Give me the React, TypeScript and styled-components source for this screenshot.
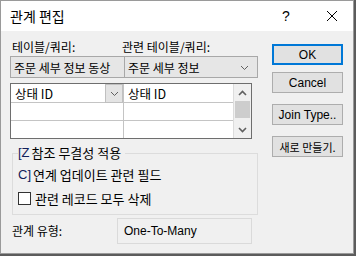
import styled, { createGlobalStyle } from "styled-components"

const GlobalStyle = createGlobalStyle`
  html, body {
    margin: 0;
    padding: 0;
    background: #5c5c5c;
  }
  body {
    font-family: "Noto Sans CJK KR", "Noto Sans", sans-serif;
    font-size: 12px;
    color: #000;
  }
`

const KR = `"Noto Sans CJK KR", "Noto Sans", sans-serif`
const LATIN = `"Liberation Sans", "Noto Sans CJK KR", sans-serif`

function Chevron({ up = false, bold = false }: { up?: boolean; bold?: boolean }) {
  return (
    <svg width="9" height="6" viewBox="0 0 9 6">
      <path
        d={up ? "M1 5 L4.5 1.5 L8 5" : "M1 1 L4.5 4.5 L8 1"}
        fill="none"
        stroke="#606060"
        strokeWidth={bold ? 1.6 : 1}
      />
    </svg>
  )
}

export default function App() {
  return (
    <>
      <GlobalStyle />
      <Dialog>
        <TitleBar>
          <Title>관계 편집</Title>
          <TitleButton $w={50}>?</TitleButton>
          <TitleButton $w={42}>
            <svg width="12" height="12" viewBox="0 0 12 12">
              <path d="M1 1 L11 11 M11 1 L1 11" stroke="#000" strokeWidth="1" />
            </svg>
          </TitleButton>
        </TitleBar>
        <Content>
          <LeftColumn>
            <Labels>
              <Label>테이블/쿼리:</Label>
              <Label>관련 테이블/쿼리:</Label>
            </Labels>
            <HeaderRow>
              <HeaderCell>주문 세부 정보 동상</HeaderCell>
              <HeaderCell $last>
                주문 세부 정보
                <Chevron />
              </HeaderCell>
            </HeaderRow>
            <FieldGrid>
              <Rows>
                <Row $h={19}>
                  <Cell>
                    상태 ID
                    <ComboButton>
                      <Chevron />
                    </ComboButton>
                  </Cell>
                  <Cell $right>상태 ID</Cell>
                </Row>
                <Row $h={18}>
                  <Cell />
                  <Cell $right />
                </Row>
                <Row $h={17} $last>
                  <Cell />
                  <Cell $right />
                </Row>
              </Rows>
              <ScrollBar>
                <ScrollArrow>
                  <Chevron up bold />
                </ScrollArrow>
                <ScrollTrack>
                  <Thumb />
                </ScrollTrack>
                <ScrollArrow>
                  <Chevron bold />
                </ScrollArrow>
              </ScrollBar>
            </FieldGrid>
            <OptionsFrame>
              <Legend>
                <Glyph>[Z</Glyph>참조 무결성 적용
              </Legend>
              <OptionRow>
                <Glyph>C]</Glyph>연계 업데이트 관련 필드
              </OptionRow>
              <OptionRow>
                <CheckBox />
                관련 레코드 모두 삭제
              </OptionRow>
            </OptionsFrame>
            <TypeRow>
              <Label>관계 유형:</Label>
              <TypeBox>One-To-Many</TypeBox>
            </TypeRow>
          </LeftColumn>
          <Buttons>
            <Button $default>OK</Button>
            <Button>Cancel</Button>
            <Button $gap>Join Type..</Button>
            <Button $small>새로 만들기.</Button>
          </Buttons>
        </Content>
      </Dialog>
    </>
  )
}

const Dialog = styled.div`
  width: 354px;
  height: 254px;
  box-sizing: border-box;
  border: 1px solid #9a9a9a;
  background: #f0f0f0;
  display: flex;
  flex-direction: column;
`

const TitleBar = styled.div`
  height: 30px;
  background: #fff;
  display: flex;
  align-items: center;
  padding-left: 9px;
`

const Title = styled.div`
  flex: 1;
  font-family: ${KR};
  font-size: 14px;
  color: #000;
`

const TitleButton = styled.div<{ $w: number }>`
  width: ${(p) => p.$w}px;
  height: 30px;
  display: flex;
  align-items: center;
  justify-content: center;
  font-family: ${LATIN};
  font-size: 14px;
`

const Content = styled.div`
  flex: 1;
  display: flex;
  padding: 0 0 0 9px;
`

const LeftColumn = styled.div`
  width: 248px;
  display: flex;
  flex-direction: column;
`

const Labels = styled.div`
  display: grid;
  grid-template-columns: 112px 1fr;
  padding-top: 6px;
  height: 19px;
  align-items: center;

  & > div:first-child {
    padding-left: 2px;
  }
`

const Label = styled.div`
  font-family: ${KR};
  font-size: 12px;
  line-height: 16px;
  white-space: nowrap;
`

const HeaderRow = styled.div`
  display: grid;
  grid-template-columns: 113px 1fr;
  height: 22px;
  box-sizing: border-box;
  border: 1px solid #a8a8a8;
  background: #e6e6e6;
`

const HeaderCell = styled.div<{ $last?: boolean }>`
  display: flex;
  align-items: center;
  justify-content: space-between;
  padding: 0 8px 0 3px;
  font-size: 12px;
  white-space: nowrap;
  overflow: hidden;
  border-left: ${(p) => (p.$last ? "1px solid #a8a8a8" : "none")};
  svg {
    margin-top: 1px;
  }
`

const FieldGrid = styled.div`
  margin-top: 5px;
  width: 242px;
  height: 56px;
  box-sizing: border-box;
  border: 1px solid #6e6e6e;
  background: #fff;
  display: flex;
`

const Rows = styled.div`
  flex: 1;
  display: flex;
  flex-direction: column;
`

const Row = styled.div<{ $h: number; $last?: boolean }>`
  height: ${(p) => p.$h}px;
  display: grid;
  grid-template-columns: 112px 1fr;
  border-bottom: ${(p) => (p.$last ? "none" : "1px solid #c4c4c4")};
  box-sizing: border-box;
`

const Cell = styled.div<{ $right?: boolean }>`
  position: relative;
  display: flex;
  align-items: center;
  padding-left: 4px;
  font-size: 12.5px;
  white-space: nowrap;
  border-left: ${(p) => (p.$right ? "1px solid #c4c4c4" : "none")};
`

const ComboButton = styled.div`
  position: absolute;
  right: 0;
  top: 0;
  width: 16px;
  height: 17px;
  background: #e4e4e4;
  border: 1px solid #c0c0c0;
  display: flex;
  align-items: center;
  justify-content: center;
`

const ScrollBar = styled.div`
  width: 17px;
  background: #f0f0f0;
  border-left: 1px solid #dcdcdc;
  display: flex;
  flex-direction: column;
`

const ScrollArrow = styled.div`
  height: 17px;
  display: flex;
  align-items: center;
  justify-content: center;
`

const ScrollTrack = styled.div`
  flex: 1;
  display: flex;
  flex-direction: column;
  padding: 0 1px;
`

const Thumb = styled.div`
  height: 17px;
  background: #cdcdcd;
`

const OptionsFrame = styled.fieldset`
  margin: 5px 0 0 2px;
  padding: 0 0 4px 5px;
  width: 246px;
  box-sizing: border-box;
  border: 1px solid #dcdcdc;
  display: flex;
  flex-direction: column;
`

const Legend = styled.legend`
  padding: 0 4px 0 0;
  margin-left: 0;
  font-size: 13px;
  line-height: 18px;
  display: flex;
  align-items: center;
`

const OptionRow = styled.div`
  display: flex;
  align-items: center;
  height: 24px;
  font-size: 13px;
`

const Glyph = styled.span`
  font-family: ${LATIN};
  font-size: 13px;
  color: #10205a;
  margin-right: 2px;
`

const CheckBox = styled.span`
  width: 11px;
  height: 11px;
  border: 1px solid #333;
  background: #fff;
  margin-right: 4px;
`

const TypeRow = styled.div`
  margin-top: 3px;
  display: flex;
  align-items: center;
  padding-left: 2px;

  & > div:first-child {
    width: 105px;
  }
`

const TypeBox = styled.div`
  width: 135px;
  height: 26px;
  box-sizing: border-box;
  border: 1px solid #dadada;
  display: flex;
  align-items: center;
  padding-left: 6px;
  font-family: ${LATIN};
  font-size: 12px;
`

const Buttons = styled.div`
  margin-left: 14px;
  padding-top: 13px;
  display: flex;
  flex-direction: column;
  gap: 7px;
`

const Button = styled.div<{ $default?: boolean; $gap?: boolean; $small?: boolean }>`
  width: 71px;
  height: 21px;
  box-sizing: border-box;
  background: #e1e1e1;
  border: ${(p) => (p.$default ? "2px solid #0078d7" : "1px solid #adadad")};
  display: flex;
  align-items: center;
  justify-content: center;
  font-family: ${(p) => (p.$small ? KR : LATIN)};
  font-size: ${(p) => (p.$small ? "11px" : "12px")};
  margin-top: ${(p) => (p.$gap ? "4px" : "0")};
  margin-bottom: ${(p) => (p.$gap ? "4px" : "0")};
`
